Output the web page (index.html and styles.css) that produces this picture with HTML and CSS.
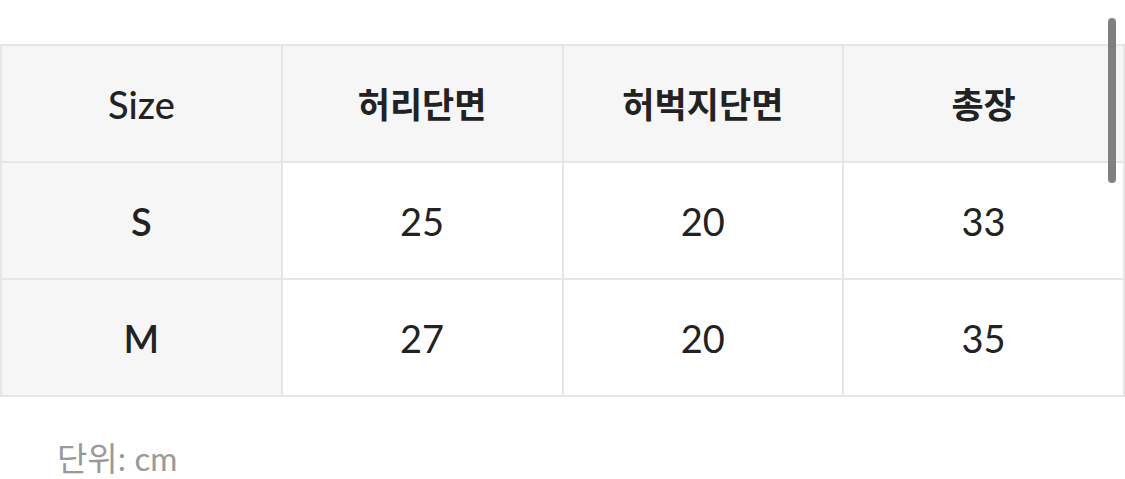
FILE: index.html
```html
<!DOCTYPE html>
<html lang="ko">
<head>
<meta charset="utf-8">
<link rel="stylesheet" href="styles.css">
</head>
<body>
<div class="page">
  <table class="size-table">
    <thead>
      <tr>
        <th class="label">Size</th>
        <th>허리단면</th>
        <th>허벅지단면</th>
        <th>총장</th>
      </tr>
    </thead>
    <tbody>
      <tr>
        <td class="label">S</td>
        <td>25</td>
        <td>20</td>
        <td>33</td>
      </tr>
      <tr>
        <td class="label">M</td>
        <td>27</td>
        <td>20</td>
        <td>35</td>
      </tr>
    </tbody>
  </table>
  <p class="unit">단위: cm</p>
  <div class="scrollbar"></div>
</div>
</body>
</html>
```
FILE: styles.css
```css
html, body {
  margin: 0;
  padding: 0;
  background: #ffffff;
}
body {
  font-family: Lato, "Noto Sans CJK KR", sans-serif;
  color: #222222;
}
.page {
  position: relative;
  width: 1125px;
  height: 479px;
  padding-top: 44px;
  box-sizing: border-box;
  overflow: hidden;
}
.size-table {
  width: 1125px;
  border-collapse: collapse;
  table-layout: fixed;
}
.size-table th,
.size-table td {
  border: 2px solid #e6e6e6;
  height: 115px;
  padding: 0;
  text-align: center;
  vertical-align: middle;
  font-size: 38px;
  line-height: 46px;
}
.size-table thead th {
  background: #f6f6f6;
  font-family: Lato, "Noto Sans CJK KR", sans-serif;
  font-weight: 700;
  font-size: 35px;
  color: #222222;
}
.size-table thead th.label {
  font-weight: 500;
  font-size: 38px;
}
.size-table td {
  font-weight: 400;
  color: #222222;
}
.size-table td.label {
  background: #f6f6f6;
  font-weight: 600;
}
.unit {
  margin: 41px 0 0 57px;
  font-size: 33px;
  line-height: 40px;
  font-weight: 400;
  color: #999999;
  font-family: Lato, "Noto Sans CJK KR", sans-serif;
}
.scrollbar {
  position: absolute;
  left: 1108px;
  top: 18px;
  width: 8px;
  height: 165px;
  border-radius: 4px;
  background: #808080;
}
```
